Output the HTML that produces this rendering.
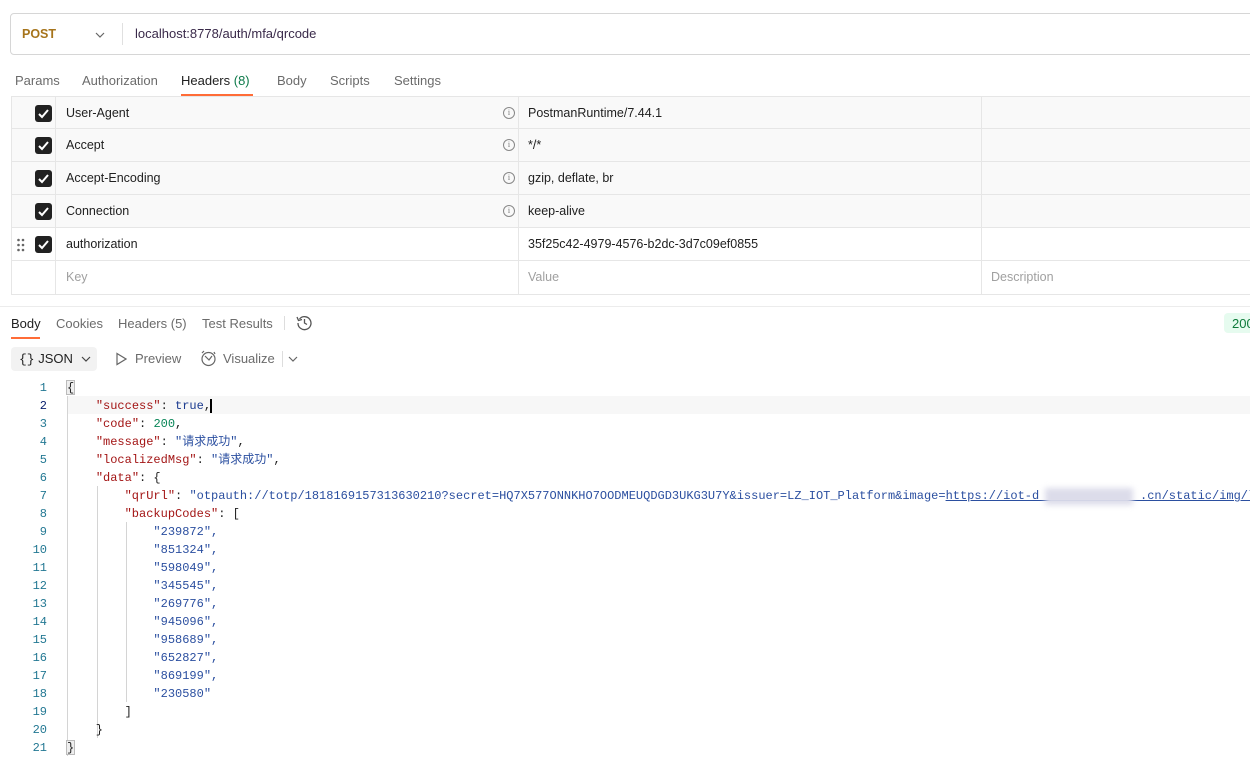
<!DOCTYPE html>
<html><head><meta charset="utf-8"><style>
*{margin:0;padding:0;box-sizing:border-box}
body{width:1250px;height:777px;overflow:hidden;background:#fff;font-family:"Liberation Sans","Noto Sans CJK SC",sans-serif;font-size:13px;color:#212121;position:relative}
.abs{position:absolute}
.url{left:10px;top:13px;width:1250px;height:42px;border:1px solid #d6d6d6;border-radius:4px}
.tabs span{position:absolute;top:73px;color:#6b6b6b;font-size:13px}
.tbl{left:11px;top:96px;width:1240px}
.row{position:absolute;left:0;width:1240px;height:33px;border-bottom:1px solid #e6e6e6}
.row.g{background:#f9f9f9}
.cb{position:absolute;left:24px;top:8px;width:17px;height:17px;background:#212121;border-radius:3px}
.cb svg{position:absolute;left:2px;top:2px}
.vl{position:absolute;top:0;bottom:0;width:1px;background:#e6e6e6}
.t{position:absolute;top:9px;font-size:12.5px;color:#212121}
.info{position:absolute;left:492px;top:10px;width:12px;height:12px;border:1px solid #888;border-radius:50%;font-size:8px;color:#777;text-align:center;line-height:10px;font-family:"Liberation Serif",serif}
.code{left:0;top:378px;font-family:"Liberation Mono",monospace;font-size:12px}
.ln{position:absolute;left:0;width:47px;text-align:right;color:#237893;line-height:18px;height:18px}
.cl{position:absolute;left:67px;white-space:pre;color:#212121;line-height:18px;height:18px}
.cl span{line-height:18px;vertical-align:top}
.k{color:#a31515}.s{color:#2b4fa0}.n{color:#098658}.b{color:#1a3a8f}
.guide{position:absolute;width:1px;background:#d4d4d4}
</style></head><body>
<div class="abs url">
<div class="abs" style="left:11px;top:13px;color:#a6741b;font-weight:bold;font-size:12.5px">POST</div>
<svg class="abs" style="left:84px;top:17px" width="10" height="8"><path d="M1 2 L5 6 L9 2" stroke="#666" fill="none" stroke-width="1.2"/></svg>
<div class="abs" style="left:111px;top:9px;width:1px;height:22px;background:#e0e0e0"></div>
<div class="abs" style="left:124px;top:12px;color:#3a2a4a;font-size:13px">localhost:8778/auth/mfa/qrcode</div>
</div>
<div class="tabs"><span style="left:15px">Params</span><span style="left:82px">Authorization</span><span style="left:181px;color:#212121">Headers <span style="position:static;color:#0d7a4a">(8)</span></span><span style="left:277px">Body</span><span style="left:330px">Scripts</span><span style="left:394px">Settings</span></div>
<div class="abs" style="left:181px;top:94px;width:72px;height:2px;background:#ff6c37"></div>
<div class="abs tbl">
<div class="row g" style="top:0;border-top:1px solid #e6e6e6"><div class="cb"><svg width="13" height="13"><path d="M2 7 L5 10 L11 3" stroke="#fff" stroke-width="2" fill="none"/></svg></div><span class="t" style="left:55px">User-Agent</span><span class="info">i</span><span class="t" style="left:517px">PostmanRuntime/7.44.1</span></div>
<div class="row g" style="top:33px"><div class="cb"><svg width="13" height="13"><path d="M2 7 L5 10 L11 3" stroke="#fff" stroke-width="2" fill="none"/></svg></div><span class="t" style="left:55px">Accept</span><span class="info">i</span><span class="t" style="left:517px">*/*</span></div>
<div class="row g" style="top:66px"><div class="cb"><svg width="13" height="13"><path d="M2 7 L5 10 L11 3" stroke="#fff" stroke-width="2" fill="none"/></svg></div><span class="t" style="left:55px">Accept-Encoding</span><span class="info">i</span><span class="t" style="left:517px">gzip, deflate, br</span></div>
<div class="row g" style="top:99px"><div class="cb"><svg width="13" height="13"><path d="M2 7 L5 10 L11 3" stroke="#fff" stroke-width="2" fill="none"/></svg></div><span class="t" style="left:55px">Connection</span><span class="info">i</span><span class="t" style="left:517px">keep-alive</span></div>
<div class="row" style="top:132px"><svg class="abs" style="left:6px;top:10px" width="8" height="14"><g fill="#666"><circle cx="1.5" cy="2" r="1.3"/><circle cx="6" cy="2" r="1.3"/><circle cx="1.5" cy="7" r="1.3"/><circle cx="6" cy="7" r="1.3"/><circle cx="1.5" cy="12" r="1.3"/><circle cx="6" cy="12" r="1.3"/></g></svg><div class="cb"><svg width="13" height="13"><path d="M2 7 L5 10 L11 3" stroke="#fff" stroke-width="2" fill="none"/></svg></div><span class="t" style="left:55px">authorization</span><span class="t" style="left:517px">35f25c42-4979-4576-b2dc-3d7c09ef0855</span></div>
<div class="row" style="top:165px;height:34px"><span class="t" style="left:55px;color:#a0a0a0">Key</span><span class="t" style="left:517px;color:#a0a0a0">Value</span><span class="t" style="left:980px;color:#a0a0a0">Description</span></div>
<div class="vl" style="left:0;top:0;height:199px"></div>
<div class="vl" style="left:44px;top:0;height:199px"></div>
<div class="vl" style="left:507px;top:0;height:199px"></div>
<div class="vl" style="left:970px;top:0;height:199px"></div>
</div>
<div class="abs" style="left:0;top:306px;width:1250px;height:1px;background:#ececec"></div>
<div class="tabs"><span style="left:11px;top:316px;color:#212121">Body</span><span style="left:56px;top:316px">Cookies</span><span style="left:118px;top:316px">Headers <span style="position:static;color:#6b6b6b">(5)</span></span><span style="left:202px;top:316px">Test Results</span></div>
<div class="abs" style="left:11px;top:337px;width:29px;height:2px;background:#ff6c37"></div>
<div class="abs" style="left:284px;top:316px;width:1px;height:14px;background:#ddd"></div>
<svg class="abs" style="left:296px;top:314px" width="17" height="17"><path d="M3.5 5 A6.5 6.5 0 1 1 2 9" stroke="#555" fill="none" stroke-width="1.3"/><path d="M1 3 L2.5 6.5 L6 5.5" stroke="#555" fill="none" stroke-width="1.3"/><path d="M8.5 5 V9 L11 10.5" stroke="#555" fill="none" stroke-width="1.3"/></svg>
<div class="abs" style="left:1224px;top:313px;width:30px;height:20px;background:#e6fbef;border-radius:4px;color:#0d7a3a;font-size:13px;padding:3px 0 0 8px">200</div>
<div class="abs" style="left:11px;top:347px;width:86px;height:24px;background:#f2f2f2;border-radius:4px"></div>
<div class="abs" style="left:19px;top:351px;font-size:13px;color:#212121"><span style="font-family:'Liberation Mono',monospace">{}</span> JSON</div>
<svg class="abs" style="left:81px;top:355px" width="10" height="8"><path d="M1 2 L5 6 L9 2" stroke="#444" fill="none" stroke-width="1.2"/></svg>
<svg class="abs" style="left:115px;top:352px" width="12" height="14"><path d="M2 1.5 L11 7 L2 12.5 Z" stroke="#666" fill="none" stroke-width="1.2"/></svg>
<div class="abs" style="left:135px;top:351px;color:#6b6b6b">Preview</div>
<svg class="abs" style="left:200px;top:350px" width="17" height="17"><circle cx="8.5" cy="9" r="6.5" stroke="#666" fill="none" stroke-width="1.2"/><path d="M5 6 L9 10 L12 6" stroke="#666" fill="none" stroke-width="1.2"/><path d="M2 3 L4 1 M14 2 L15 4" stroke="#666" stroke-width="1.2"/></svg>
<div class="abs" style="left:223px;top:351px;color:#6b6b6b">Visualize</div>
<div class="abs" style="left:282px;top:351px;width:1px;height:16px;background:#ddd"></div>
<svg class="abs" style="left:288px;top:355px" width="10" height="8"><path d="M1 2 L5 6 L9 2" stroke="#666" fill="none" stroke-width="1.2"/></svg>
<div class="abs code">
<div class="abs" style="left:67px;top:18px;width:1190px;height:18px;background:#f7f7f7"></div>
<div class="guide" style="left:67px;top:18px;height:360px"></div>
<div class="guide" style="left:97px;top:108px;height:252px"></div>
<div class="guide" style="left:126px;top:144px;height:180px"></div>
<div class="abs" style="left:66px;top:2px;width:9px;height:15px;border:1px solid #bbb;background:#eee"></div>
<div class="abs" style="left:66px;top:362px;width:9px;height:15px;border:1px solid #bbb;background:#eee"></div>
<div class="ln" style="top:1px">1</div><div class="cl" style="top:1px">{</div>
<div class="ln" style="top:19px;color:#0b216f">2</div><div class="cl" style="top:19px">    <span class="k">"success"</span>: <span class="b">true</span>,<span style="border-left:2px solid #000;margin-left:-1px"></span></div>
<div class="ln" style="top:37px">3</div><div class="cl" style="top:37px">    <span class="k">"code"</span>: <span class="n">200</span>,</div>
<div class="ln" style="top:55px">4</div><div class="cl" style="top:55px">    <span class="k">"message"</span>: <span class="s">"请求成功"</span>,</div>
<div class="ln" style="top:73px">5</div><div class="cl" style="top:73px">    <span class="k">"localizedMsg"</span>: <span class="s">"请求成功"</span>,</div>
<div class="ln" style="top:91px">6</div><div class="cl" style="top:91px">    <span class="k">"data"</span>: {</div>
<div class="ln" style="top:109px">7</div><div class="cl" style="top:109px">        <span class="k">"qrUrl"</span>: <span class="s">"otpauth://totp/1818169157313630210?secret=HQ7X577ONNKHO7OODMEUQDGD3UKG3U7Y&amp;issuer=LZ_IOT_Platform&amp;image=<span style="text-decoration:underline">https://iot-d              .cn/static/img/lo</span></span></div>
<div class="abs" style="left:1045px;top:110px;width:88px;height:17px;background:#dcdcea;filter:blur(3px)"></div>
<div class="ln" style="top:127px">8</div><div class="cl" style="top:127px">        <span class="k">"backupCodes"</span>: [</div>
<div class="ln" style="top:145px">9</div><div class="cl s" style="top:145px">            "239872",</div>
<div class="ln" style="top:163px">10</div><div class="cl s" style="top:163px">            "851324",</div>
<div class="ln" style="top:181px">11</div><div class="cl s" style="top:181px">            "598049",</div>
<div class="ln" style="top:199px">12</div><div class="cl s" style="top:199px">            "345545",</div>
<div class="ln" style="top:217px">13</div><div class="cl s" style="top:217px">            "269776",</div>
<div class="ln" style="top:235px">14</div><div class="cl s" style="top:235px">            "945096",</div>
<div class="ln" style="top:253px">15</div><div class="cl s" style="top:253px">            "958689",</div>
<div class="ln" style="top:271px">16</div><div class="cl s" style="top:271px">            "652827",</div>
<div class="ln" style="top:289px">17</div><div class="cl s" style="top:289px">            "869199",</div>
<div class="ln" style="top:307px">18</div><div class="cl s" style="top:307px">            "230580"</div>
<div class="ln" style="top:325px">19</div><div class="cl" style="top:325px">        ]</div>
<div class="ln" style="top:343px">20</div><div class="cl" style="top:343px">    }</div>
<div class="ln" style="top:361px">21</div><div class="cl" style="top:361px">}</div>
</div>
</body></html>
